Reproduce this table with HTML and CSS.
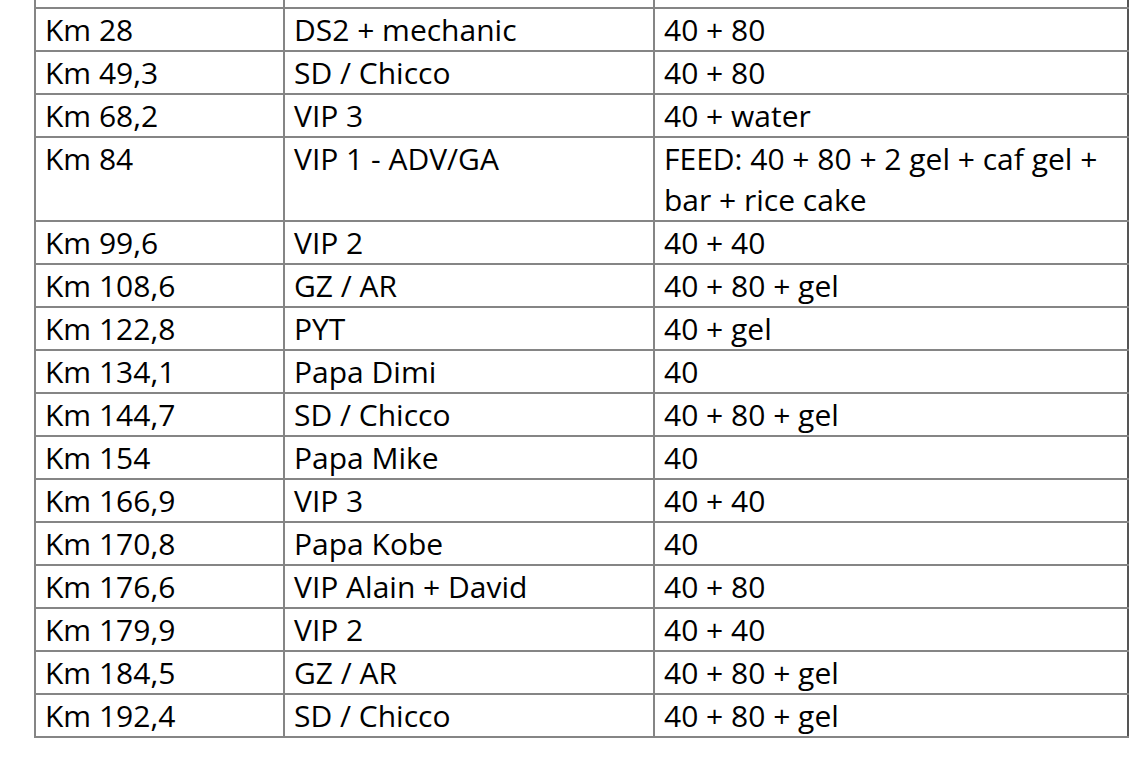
FILE: index.html
```html
<!DOCTYPE html>
<html>
<head>
<meta charset="utf-8">
<link rel="stylesheet" href="styles.css">
</head>
<body>
<table class="plan">
  <colgroup>
    <col class="c-km">
    <col class="c-who">
    <col class="c-what">
  </colgroup>
  <tbody>
    <tr class="stub"><td></td><td></td><td></td></tr>
    <tr><td>Km 28</td><td>DS2 + mechanic</td><td>40 + 80</td></tr>
    <tr><td>Km 49,3</td><td>SD / Chicco</td><td>40 + 80</td></tr>
    <tr><td>Km 68,2</td><td>VIP 3</td><td>40 + water</td></tr>
    <tr><td>Km 84</td><td>VIP 1 - ADV/GA</td><td>FEED: 40 + 80 + 2 gel + caf gel + bar + rice cake</td></tr>
    <tr><td>Km 99,6</td><td>VIP 2</td><td>40 + 40</td></tr>
    <tr><td>Km 108,6</td><td>GZ / AR</td><td>40 + 80 + gel</td></tr>
    <tr><td>Km 122,8</td><td>PYT</td><td>40 + gel</td></tr>
    <tr><td>Km 134,1</td><td>Papa Dimi</td><td>40</td></tr>
    <tr><td>Km 144,7</td><td>SD / Chicco</td><td>40 + 80 + gel</td></tr>
    <tr><td>Km 154</td><td>Papa Mike</td><td>40</td></tr>
    <tr><td>Km 166,9</td><td>VIP 3</td><td>40 + 40</td></tr>
    <tr><td>Km 170,8</td><td>Papa Kobe</td><td>40</td></tr>
    <tr><td>Km 176,6</td><td>VIP Alain + David</td><td>40 + 80</td></tr>
    <tr><td>Km 179,9</td><td>VIP 2</td><td>40 + 40</td></tr>
    <tr><td>Km 184,5</td><td>GZ / AR</td><td>40 + 80 + gel</td></tr>
    <tr><td>Km 192,4</td><td>SD / Chicco</td><td>40 + 80 + gel</td></tr>
  </tbody>
</table>
</body>
</html>
```
FILE: styles.css
```css
html, body {
  margin: 0;
  padding: 0;
  background: #ffffff;
}

body {
  font-family: "Open Sans", "Liberation Sans", sans-serif;
  color: #000;
}

.plan {
  margin-left: 34px;
  border-collapse: collapse;
  table-layout: fixed;
  width: 1093px;
}

.c-km { width: 249px; }
.c-who { width: 370px; }
.c-what { width: 474px; }

.plan td {
  border: 2px solid #858585;
  padding: 0 8px 0 9px;
  font-size: 30px;
  line-height: 41px;
  vertical-align: top;
  white-space: normal;
}

.plan td:last-child {
  border-right-color: #555;
}

.plan .stub td {
  border-top: none;
  height: 7px;
  padding: 0;
  line-height: 0;
}
```
